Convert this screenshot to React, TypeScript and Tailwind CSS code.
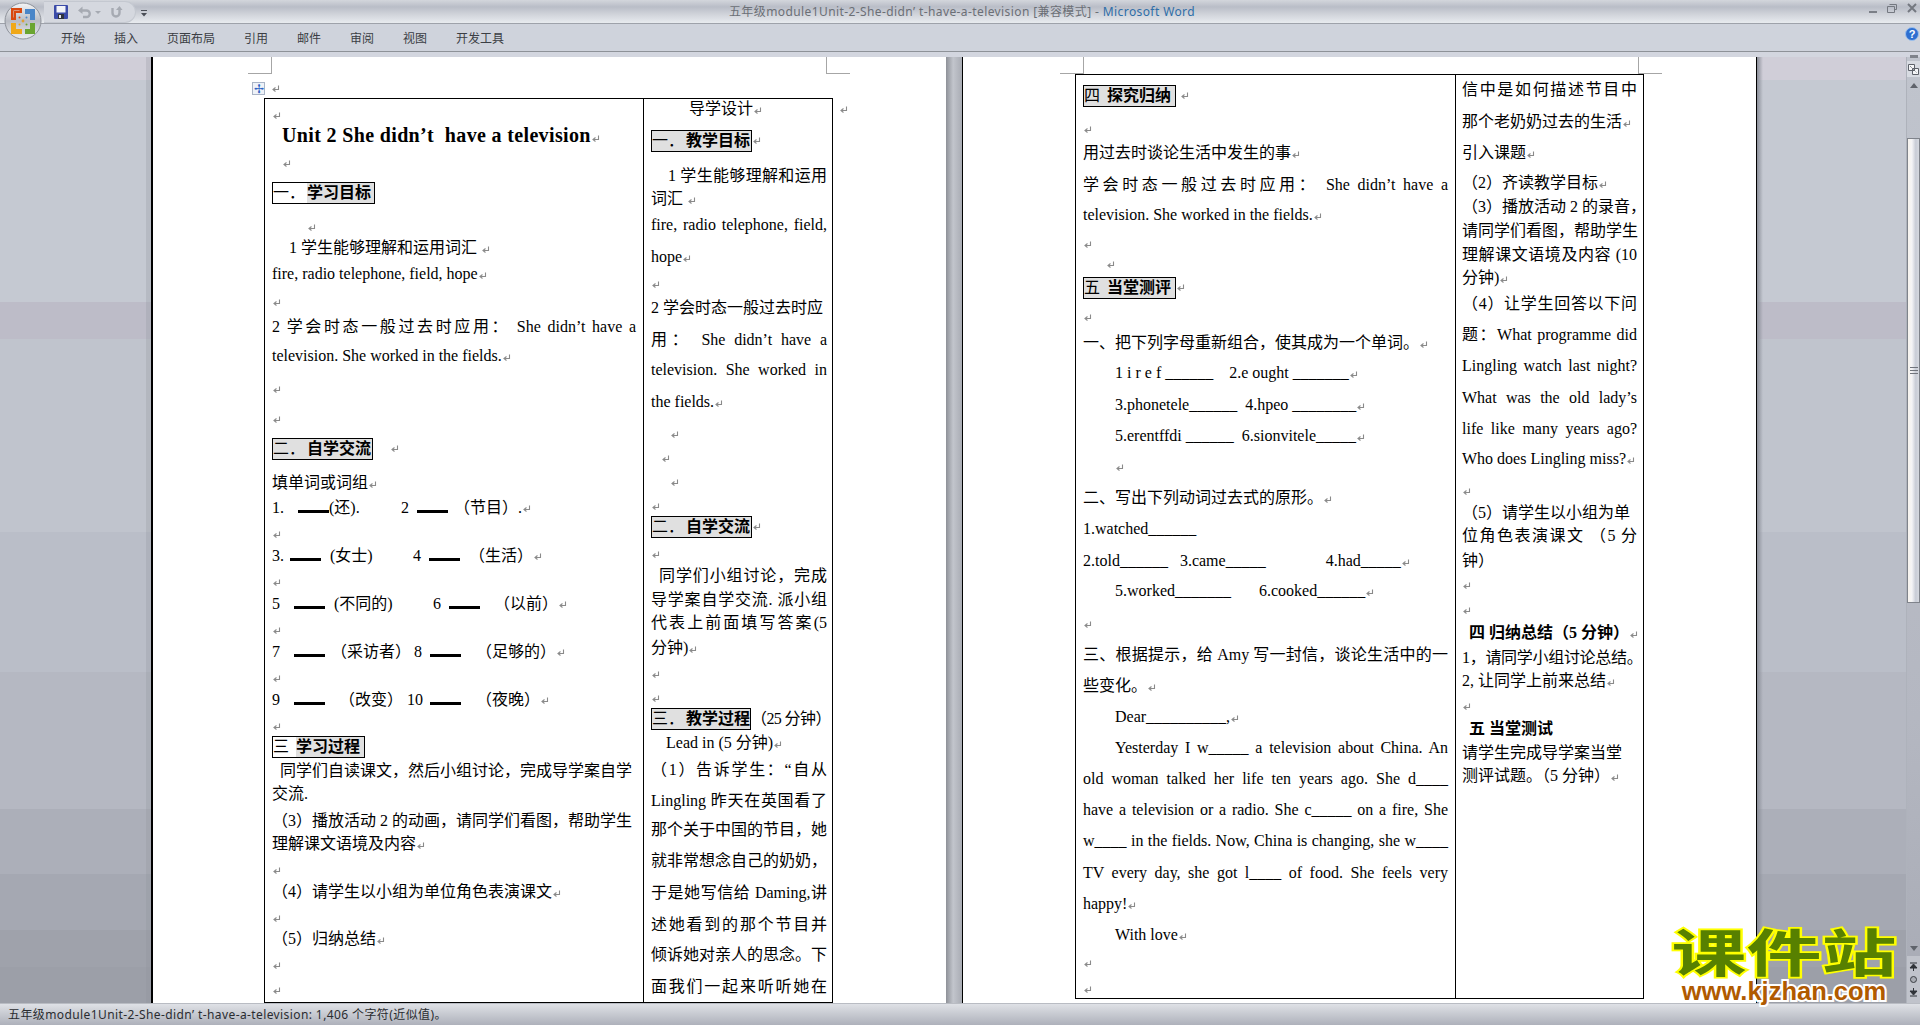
import { ReactNode } from "react";
import clsx from "clsx";

const serif = "font-['Liberation_Serif','Noto_Sans_CJK_SC',serif]";

function P({ className }: { className?: string }) {
  return (
    <svg viewBox="0 0 8 8" className={clsx("inline-block w-[8px] h-[8px] ml-[1px] align-[-1px]", className)}>
      <path d="M6.5 .5V4.5H1.5M3.5 2.5L1 4.5L3.5 6.5" fill="none" stroke="#8a8a8a" strokeWidth="1.1" />
    </svg>
  );
}

function L({ className, children }: { className?: string; children?: ReactNode }) {
  return <div className={clsx("h-[20px] leading-[20px] whitespace-pre", className)}>{children}</div>;
}

// justified line, stretched to the cell width like Word does
function J({ className, children }: { className?: string; children?: ReactNode }) {
  return (
    <div className={clsx("h-[20px] leading-[20px] text-justify [text-align-last:justify]", className)}>
      {children}
    </div>
  );
}

function Box({ className, label, title, plain, narrow }: { className?: string; label: string; title: string; plain?: boolean; narrow?: boolean }) {
  return (
    <div className={clsx("flex h-[22px] leading-[20px] border border-black font-bold whitespace-pre overflow-hidden", plain ? "" : "bg-[#e0e0e0]", className)}>
      <span className={clsx("font-normal shrink-0", narrow ? "w-[23px] font-bold" : "w-[34px]")}>{label}</span>
      <span className="bg-[#e0e0e0] flex-1">{title}</span>
    </div>
  );
}

function Blank() {
  return <span className="w-[31px] h-[15px] border-b-[3px] border-black shrink-0" />;
}

function LeftCell() {
  return (
    <div className="w-[378px] h-full shrink-0 px-[7px] overflow-hidden">
      <L className="mt-[5px]"><P /></L>
      <L className="mt-[1px] pl-[10px] text-[20px] font-bold tracking-[0.35px]">Unit 2 She didn’t  have a television<P /></L>
      <L className="mt-[7px] pl-[10px]"><P /></L>
      <Box className="mt-[10px] w-[103px]" label="一．" title="学习目标" plain />
      <L className="mt-[12px] pl-[35px]"><P /></L>
      <L className="mt-[2px] pl-[17px]">1 学生能够理解和运用词汇 <P /></L>
      <L className="mt-[6px]">fire, radio telephone, field, hope<P /></L>
      <L className="mt-[7px]"><P /></L>
      <J className="mt-[6px]">2 学会时态一般过去时应用： She didn’t have a</J>
      <L className="mt-[9px]">television. She worked in the fields.<P /></L>
      <L className="mt-[12px]"><P /></L>
      <L className="mt-[10px]"><P /></L>
      <div className="flex items-center mt-[10px]">
        <Box className="w-[101px]" label="二．" title="自学交流" />
        <P className="ml-[18px]" />
      </div>
      <L className="mt-[13px]">填单词或词组<P /></L>
      <L className="mt-[5px] flex"><span className="w-[26px]">1.</span><Blank /><span className="w-[72px]">(还).</span><span className="w-[16px]">2</span><Blank /><span className="ml-[6px]">（节目）.</span><P className="mt-[7px]" /></L>
      <L className="mt-[5px]"><P /></L>
      <L className="mt-[3px] flex"><span className="w-[18px]">3.</span><Blank /><span className="w-[92px] pl-[9px]">(女士)</span><span className="w-[16px]">4</span><Blank /><span className="ml-[9px]">（生活）</span><P className="mt-[7px]" /></L>
      <L className="mt-[5px]"><P /></L>
      <L className="mt-[3px] flex"><span className="w-[22px]">5</span><Blank /><span className="w-[108px] pl-[9px]">(不同的)</span><span className="w-[16px]">6</span><Blank /><span className="ml-[14px]">（以前）</span><P className="mt-[7px]" /></L>
      <L className="mt-[5px]"><P /></L>
      <L className="mt-[3px] flex"><span className="w-[22px]">7</span><Blank /><span className="w-[89px] pl-[6px]">（采访者）</span><span className="w-[16px]">8</span><Blank /><span className="ml-[15px]">（足够的）</span><P className="mt-[7px]" /></L>
      <L className="mt-[5px]"><P /></L>
      <L className="mt-[3px] flex"><span className="w-[22px]">9</span><Blank /><span className="w-[82px] pl-[14px]">（改变）</span><span className="w-[23px]">10</span><Blank /><span className="ml-[15px]">（夜晚）</span><P className="mt-[7px]" /></L>
      <L className="mt-[5px]"><P /></L>
      <Box className="mt-[1px] w-[93px]" label="三 " title="学习过程" plain narrow />
      <L className="mt-[3px] pl-[8px]">同学们自读课文，然后小组讨论，完成导学案自学</L>
      <L className="mt-[3px]">交流.</L>
      <L className="mt-[7px]">（3）播放活动 2 的动画，请同学们看图，帮助学生</L>
      <L className="mt-[3px]">理解课文语境及内容<P /></L>
      <L className="mt-[5px]"><P /></L>
      <L className="mt-[3px]">（4）请学生以小组为单位角色表演课文<P /></L>
      <L className="mt-[5px]"><P /></L>
      <L className="mt-[2px]">（5）归纳总结<P /></L>
      <L className="mt-[5px]"><P /></L>
      <L className="mt-[5px]"><P /></L>
    </div>
  );
}

function GuideCell() {
  return (
    <div className="flex-1 h-full border-l border-black pl-[7px] pr-[5px] overflow-hidden">
      <L className="pl-[38px]">导学设计<P /></L>
      <div className="flex items-center mt-[11px]">
        <Box className="w-[101px]" label="一．" title="教学目标" />
        <P />
      </div>
      <J className="mt-[14px] pl-[17px]">1 学生能够理解和运用</J>
      <L className="mt-[3px]">词汇 <P /></L>
      <J className="mt-[6px]">fire, radio telephone, field,</J>
      <L className="mt-[12px]">hope<P /></L>
      <L className="mt-[6px]"><P /></L>
      <L className="mt-[5px]">2 学会时态一般过去时应</L>
      <J className="mt-[12px]">用： She didn’t have a</J>
      <J className="mt-[10px]">television. She worked in</J>
      <L className="mt-[12px]">the fields.<P /></L>
      <L className="mt-[11px] pl-[19px]"><P /></L>
      <L className="mt-[4px] pl-[10px]"><P /></L>
      <L className="mt-[4px] pl-[19px]"><P /></L>
      <L className="mt-[4px]"><P /></L>
      <div className="flex items-center mt-[1px]">
        <Box className="w-[101px]" label="二．" title="自学交流" />
        <P />
      </div>
      <L className="mt-[5px]"><P /></L>
      <J className="mt-[3px] pl-[8px]">同学们小组讨论，完成</J>
      <J className="mt-[4px]">导学案自学交流. 派小组</J>
      <J className="mt-[3px]">代表上前面填写答案(5</J>
      <L className="mt-[5px]">分钟)<P /></L>
      <L className="mt-[5px]"><P /></L>
      <L className="mt-[4px]"><P /></L>
      <div className="flex items-center mt-[1px] whitespace-pre h-[22px]">
        <Box className="w-[100px] shrink-0" label="三．" title="教学过程" />
        <span className="tracking-[-0.6px]">（25 分钟）</span>
        <P className="ml-0" />
      </div>
      <L className="mt-[3px] pl-[15px]">Lead in (5 分钟)<P /></L>
      <J className="mt-[7px]">（1）告诉学生：“自从</J>
      <J className="mt-[11px]">Lingling 昨天在英国看了</J>
      <J className="mt-[9px]">那个关于中国的节目，她</J>
      <J className="mt-[11px]">就非常想念自己的奶奶，</J>
      <J className="mt-[12px]">于是她写信给 Daming,讲</J>
      <J className="mt-[12px]">述她看到的那个节目并</J>
      <J className="mt-[10px]">倾诉她对亲人的思念。下</J>
      <J className="mt-[12px]">面我们一起来听听她在</J>
    </div>
  );
}

function ExerciseCell() {
  return (
    <div className="w-[379px] h-full shrink-0 px-[7px] overflow-hidden">
      <div className="flex items-center mt-[10px]">
        <Box className="w-[93px]" label="四 " title="探究归纳" narrow />
        <P className="ml-[5px]" />
      </div>
      <L className="mt-[11px]"><P /></L>
      <L className="mt-[5px]">用过去时谈论生活中发生的事<P /></L>
      <J className="mt-[12px]">学会时态一般过去时应用： She didn’t have a</J>
      <L className="mt-[10px]">television. She worked in the fields.<P /></L>
      <L className="mt-[8px]"><P /></L>
      <L className="pl-[23px]"><P /></L>
      <div className="flex items-center mt-[4px]">
        <Box className="w-[93px]" label="五 " title="当堂测评" narrow />
        <P />
      </div>
      <L className="mt-[7px]"><P /></L>
      <L className="mt-[7px]">一、把下列字母重新组合，使其成为一个单词。<P /></L>
      <L className="mt-[10px] pl-[32px]">1 i r e f ______    2.e ought _______<P /></L>
      <L className="mt-[12px] pl-[32px]">3.phonetele______  4.hpeo ________<P /></L>
      <L className="mt-[11px] pl-[32px]">5.erentffdi ______  6.sionvitele_____<P /></L>
      <L className="mt-[10px] pl-[32px]"><P /></L>
      <L className="mt-[12px]">二、写出下列动词过去式的原形。<P /></L>
      <L className="mt-[11px]">1.watched______</L>
      <L className="mt-[12px]">2.told______   3.came_____               4.had_____<P /></L>
      <L className="mt-[10px] pl-[32px]">5.worked_______       6.cooked______<P /></L>
      <L className="mt-[12px]"><P /></L>
      <J className="mt-[12px]">三、根据提示，给 Amy 写一封信，谈论生活中的一</J>
      <L className="mt-[11px]">些变化。<P /></L>
      <L className="mt-[11px] pl-[32px]">Dear__________,<P /></L>
      <J className="mt-[11px] pl-[32px]">Yesterday I w_____ a television about China. An</J>
      <J className="mt-[11px]">old woman talked her life ten years ago. She d____</J>
      <J className="mt-[11px]">have a television or a radio. She c_____ on a fire, She</J>
      <J className="mt-[11px]">w____ in the fields. Now, China is changing, she w____</J>
      <J className="mt-[12px]">TV every day, she got l____ of food. She feels very</J>
      <L className="mt-[11px]">happy!<P /></L>
      <L className="mt-[11px] pl-[32px]">With love<P /></L>
      <L className="mt-[7px]"><P /></L>
      <L className="mt-[6px]"><P /></L>
    </div>
  );
}

function PlanCell() {
  return (
    <div className="flex-1 h-full border-l border-black px-[6px] overflow-hidden">
      <J className="mt-[5px]">信中是如何描述节目中</J>
      <L className="mt-[12px]">那个老奶奶过去的生活<P /></L>
      <L className="mt-[11px]">引入课题<P /></L>
      <L className="mt-[10px]">（2）齐读教学目标<P /></L>
      <L className="mt-[4px]">（3）播放活动 2 的录音，</L>
      <L className="mt-[4px]">请同学们看图，帮助学生</L>
      <J className="mt-[4px]">理解课文语境及内容 (10</J>
      <L className="mt-[3px]">分钟)<P /></L>
      <J className="mt-[6px]">（4）让学生回答以下问</J>
      <J className="mt-[11px]">题：What   programme did</J>
      <J className="mt-[11px]">Lingling watch last night?</J>
      <J className="mt-[12px]">What was the old lady’s</J>
      <J className="mt-[11px]">life like many years ago?</J>
      <L className="mt-[10px]">Who does Lingling miss?<P /></L>
      <L className="mt-[11px]"><P /></L>
      <L className="mt-[3px]">（5）请学生以小组为单</L>
      <J className="mt-[3px]">位角色表演课文 （5 分</J>
      <L className="mt-[5px]">钟）</L>
      <L className="mt-[3px]"><P /></L>
      <L className="mt-[5px]"><P /></L>
      <L className="mt-[4px] pl-[7px] font-bold">四 归纳总结（5 分钟）<P /></L>
      <L className="mt-[5px] tracking-[-0.3px]">1，请同学小组讨论总结。</L>
      <L className="mt-[3px]">2, 让同学上前来总结<P /></L>
      <L className="mt-[4px]"><P /></L>
      <L className="mt-[4px] pl-[7px] font-bold">五 当堂测试</L>
      <L className="mt-[4px]">请学生完成导学案当堂</L>
      <L className="mt-[3px]">测评试题。（5 分钟）<P /></L>
    </div>
  );
}

function CropMark({ className }: { className: string }) {
  return <div className={clsx("absolute top-0 w-[24px] h-[17px] border-b border-[#a6a6a6]", className)} />;
}

function OfficeButton() {
  return (
    <svg viewBox="0 0 38 38" className="absolute left-[4px] top-[2px] w-[38px] h-[38px]">
      <defs>
        <linearGradient id="orb" x1="0" y1="0" x2="0" y2="1">
          <stop offset="0" stopColor="#f4f5f7" />
          <stop offset="0.5" stopColor="#b9bcc4" />
          <stop offset="1" stopColor="#eceef1" />
        </linearGradient>
      </defs>
      <circle cx="19" cy="19" r="18" fill="url(#orb)" stroke="#8f939b" />
      <path d="M7 6h11v5h-6v7H7zM9.5 8.5v7H10V9h5.5v-.5z" fill="#d9480f" />
      <path d="M21 7h10v11h-5v-6h-5z" fill="#4a86c8" />
      <path d="M7 21h5v6h6v5H7z" fill="#f0a818" />
      <path d="M21 32v-5h5v-6h5v11z" fill="#6aa530" />
      <circle cx="19" cy="19" r="1.4" fill="#e0a030" />
      <circle cx="15.5" cy="15.5" r="1" fill="#d9480f" />
      <circle cx="22.5" cy="15.5" r="1" fill="#4a86c8" />
      <circle cx="15.5" cy="22.5" r="1" fill="#f0a818" />
      <circle cx="22.5" cy="22.5" r="1" fill="#6aa530" />
    </svg>
  );
}

function QuickAccess() {
  return (
    <div className="absolute left-[44px] top-[1px] flex items-center w-[92px] h-[22px] pl-[10px] rounded-r-full border border-l-0 border-[#c4c8d0] bg-[#d5d8df]">
      <svg viewBox="0 0 14 14" className="w-[14px] h-[14px]">
        <rect width="14" height="14" rx="1" fill="#3b4ba8" />
        <rect x="2.5" y="1" width="9" height="6.5" fill="#f2f4f8" />
        <rect x="4" y="9" width="6" height="5" fill="#30343c" />
        <rect x="5" y="10" width="2" height="3" fill="#e6e8ee" />
      </svg>
      <svg viewBox="0 0 14 14" className="ml-[9px] w-[14px] h-[14px]">
        <path d="M3 5.5H9.5A3 3 0 0 1 9.5 12H6" fill="none" stroke="#a6aab2" strokeWidth="2.4" />
        <path d="M5.5 1.5V9L1 5.5z" fill="#a6aab2" />
      </svg>
      <span className="ml-[4px] w-0 h-0 border-x-[3px] border-x-transparent border-t-[3px] border-t-[#a6aab2]" />
      <svg viewBox="0 0 14 14" className="ml-[8px] w-[14px] h-[14px]">
        <path d="M3.5 3V8A3.5 3.5 0 0 0 10.5 8V4" fill="none" stroke="#a6aab2" strokeWidth="2.4" />
        <path d="M7 5L10.5 1L13.5 5z" fill="#a6aab2" />
      </svg>
      <svg viewBox="0 0 6 7" className="absolute left-[97px] top-[8px] w-[6px] h-[7px]">
        <path d="M0 0H6V1H0zM0 3H6L3 6.5z" fill="#4a4e56" />
      </svg>
    </div>
  );
}

function WindowButtons() {
  return (
    <div className="flex items-center gap-[10px] pr-[3px]">
      <span className="w-[8px] h-[2px] mt-[8px] bg-[#7b7f87]" />
      <svg viewBox="0 0 10 9" className="w-[10px] h-[9px]">
        <path d="M2.5 .5H9.5V5.5H7.5M.5 2.5H7.5V8.5H.5z" fill="none" stroke="#747880" />
      </svg>
      <svg viewBox="0 0 10 10" className="w-[10px] h-[10px]">
        <path d="M1 1L9 9M9 1L1 9" stroke="#747880" strokeWidth="2" />
      </svg>
    </div>
  );
}

function ScrollBar() {
  return (
    <div className="relative w-[14px] h-full shrink-0 bg-[linear-gradient(#c0c4cd,#b4b7c1_70%,#a8abb5)] border-l border-[#aeb2bb]">
      <div className="mx-auto mt-[-2px] w-[8px] h-[3px] bg-[#7f838b]" />
      <div className="mt-[3px] flex justify-center h-[16px] items-center bg-[#d8dbe2]">
        <svg viewBox="0 0 11 11" className="w-[11px] h-[11px]">
          <path d="M.5 .5H6.5V6.5H.5zM4.5 4.5H10.5V10.5H4.5z" fill="#f5f6f8" stroke="#5e626a" />
          <path d="M2 2L9 9" stroke="#5e626a" strokeDasharray="1 1" />
        </svg>
      </div>
      <div className="mx-auto mt-[6px] w-0 h-0 border-x-[4px] border-x-transparent border-b-[5px] border-b-[#5f636b]" />
      <div className="mt-[50px] h-[465px] border border-[#7f838b] bg-[linear-gradient(90deg,#f8f4ee,#f4f4f6_35%,#c8ccd6_70%,#d6d9e0)] flex items-center justify-center">
        <div className="w-[8px] h-[8px] bg-[repeating-linear-gradient(#70747c_0,#70747c_1px,transparent_1px,transparent_3px)]" />
      </div>
      <div className="absolute left-[3px] bottom-[52px] w-0 h-0 border-x-[4px] border-x-transparent border-t-[5px] border-t-[#5f636b]" />
      <div className="absolute left-0 right-0 bottom-0 h-[47px] bg-[#c0c3cb] flex flex-col items-center justify-around py-[3px]">
        <svg viewBox="0 0 9 9" className="w-[9px] h-[9px]"><path d="M1 1H8M4.5 2L8 6H1zM4.5 6V9" stroke="#2f3338" fill="#2f3338" /></svg>
        <span className="w-[7px] h-[7px] rounded-full border border-[#3b3f45] bg-[#a9acb3]" />
        <svg viewBox="0 0 9 9" className="w-[9px] h-[9px]"><path d="M1 8H8M4.5 7L8 3H1zM4.5 3V0" stroke="#2f3338" fill="#2f3338" /></svg>
      </div>
    </div>
  );
}

export default function App() {
  return (
    <div className={clsx("relative flex flex-col w-[1920px] h-[1025px] overflow-hidden text-[16px] text-black", serif)}>
      {/* title bar */}
      <div className="relative flex items-center justify-center h-[24px] pt-[1px] shrink-0 border-b border-[#9ea2aa] bg-[linear-gradient(#d3d6dc,#b9bdc7_30%,#cfd2d9_60%,#e8ebef)] font-['Noto_Sans','Noto_Sans_CJK_SC',sans-serif] text-[12px] text-[#6b6f76] tracking-[0.4px]">
        <span className="ml-[4px]">五年级module1Unit-2-She-didn’  t-have-a-television [兼容模式] - <span className="text-[#2f6ea8]">Microsoft Word</span></span>
        <div className="absolute right-0 top-[3px]"><WindowButtons /></div>
      </div>
      {/* ribbon tabs */}
      <div className="relative flex items-center h-[28px] shrink-0 pl-[61px] gap-[29px] border-b border-[#8e9298] bg-[#cfd3dc] font-['Noto_Sans_CJK_SC',sans-serif] text-[12px] text-[#3b3e44]">
        <span>开始</span>
        <span>插入</span>
        <span>页面布局</span>
        <span>引用</span>
        <span>邮件</span>
        <span>审阅</span>
        <span>视图</span>
        <span>开发工具</span>
        <div className="absolute right-[1px] top-[3px] w-[14px] h-[14px] rounded-full bg-[#2f6fd0] border border-[#9cc0ee] flex items-center justify-center font-['Liberation_Sans',sans-serif] text-[11px] font-bold text-white">?</div>
      </div>
      <div className="h-[5px] shrink-0 bg-[#d3d6df]" />

      {/* document area */}
      <div className="flex flex-1 min-h-0 bg-[linear-gradient(#d0ced8_0,#d0ced8_23px,#c5c9d2_23px,#c5c9d2_245px,#bdbcc8_245px,#bdbcc8_282px,#c0c4cd_282px,#c0c4cd_475px,#babec8_475px,#babec8_615px,#b5b8c2_615px,#b5b8c2_752px,#acafb9_752px,#acafb9_817px,#a5a8b2_817px,#a5a8b2_873px,#9fa2ab_873px,#9fa2ab_910px,#9c9fa8_910px)]">
        <div className="w-[151px] shrink-0 flex justify-end">
          <div className="w-[5px] h-full bg-[#8a8e98]/25" />
        </div>

        <div className="relative w-[795px] h-full shrink-0 bg-white border-l-2 border-black">
          <CropMark className="left-[95px] border-r" />
          <CropMark className="left-[673px] border-l" />
          <div className="flex items-center h-[41px] pt-[22px] pl-[99px]">
            <div className="flex items-center justify-center w-[13px] h-[13px] border border-[#a9b4c6] bg-[#eef2f8] text-[#2f62c4] text-[12px] leading-none font-['Liberation_Sans',sans-serif]">✢</div>
            <P className="ml-[7px]" />
          </div>
          <div className="relative flex ml-[111px] w-[569px] h-[905px] border border-black">
            <LeftCell />
            <GuideCell />
            <P className="absolute left-[574px] top-[7px]" />
          </div>
        </div>

        <div className="w-[16px] h-full shrink-0 bg-[linear-gradient(90deg,#8e9198,#c2c5cc_45%,#a9acb4)]" />

        <div className="relative w-[795px] h-full shrink-0 bg-white border-x border-black">
          <CropMark className="left-[97px] border-r" />
          <CropMark className="left-[675px] border-l" />
          <div className="flex ml-[112px] mt-[17px] w-[569px] h-[925px] border border-black">
            <ExerciseCell />
            <PlanCell />
          </div>
        </div>

        <div className="flex-1 flex">
          <div className="w-[6px] h-full bg-[linear-gradient(90deg,#8a8e98,transparent)]" />
        </div>
        <ScrollBar />
      </div>

      {/* status bar */}
      <div className="flex items-center h-[22px] shrink-0 pl-[8px] border-t border-[#b9bcc3] bg-[linear-gradient(#dfe1e6,#c6c9d0_50%,#aeb1bb)] font-['Noto_Sans','Noto_Sans_CJK_SC',sans-serif] text-[12px] text-[#2a2c30] tracking-[0.4px]">
        五年级module1Unit-2-She-didn’  t-have-a-television: 1,406 个字符(近似值)。
      </div>

      <OfficeButton />
      <QuickAccess />

      {/* watermark */}
      <div className="absolute left-[1660px] top-[922px] w-[248px] text-center">
        <div className="h-[56px] text-[75px] leading-[56px] tracking-[0px] whitespace-pre font-bold font-['Noto_Sans_CJK_SC',sans-serif] text-[#578000] [-webkit-text-stroke:5px_#ffff00] [paint-order:stroke_fill] scale-y-[0.68]">课件站</div>
        <div className="text-[25.5px] leading-[26px] font-bold font-['Liberation_Sans',sans-serif] text-[#b05a00] [-webkit-text-stroke:4px_#ffffff] [paint-order:stroke_fill]">www.kjzhan.com</div>
      </div>
    </div>
  );
}
